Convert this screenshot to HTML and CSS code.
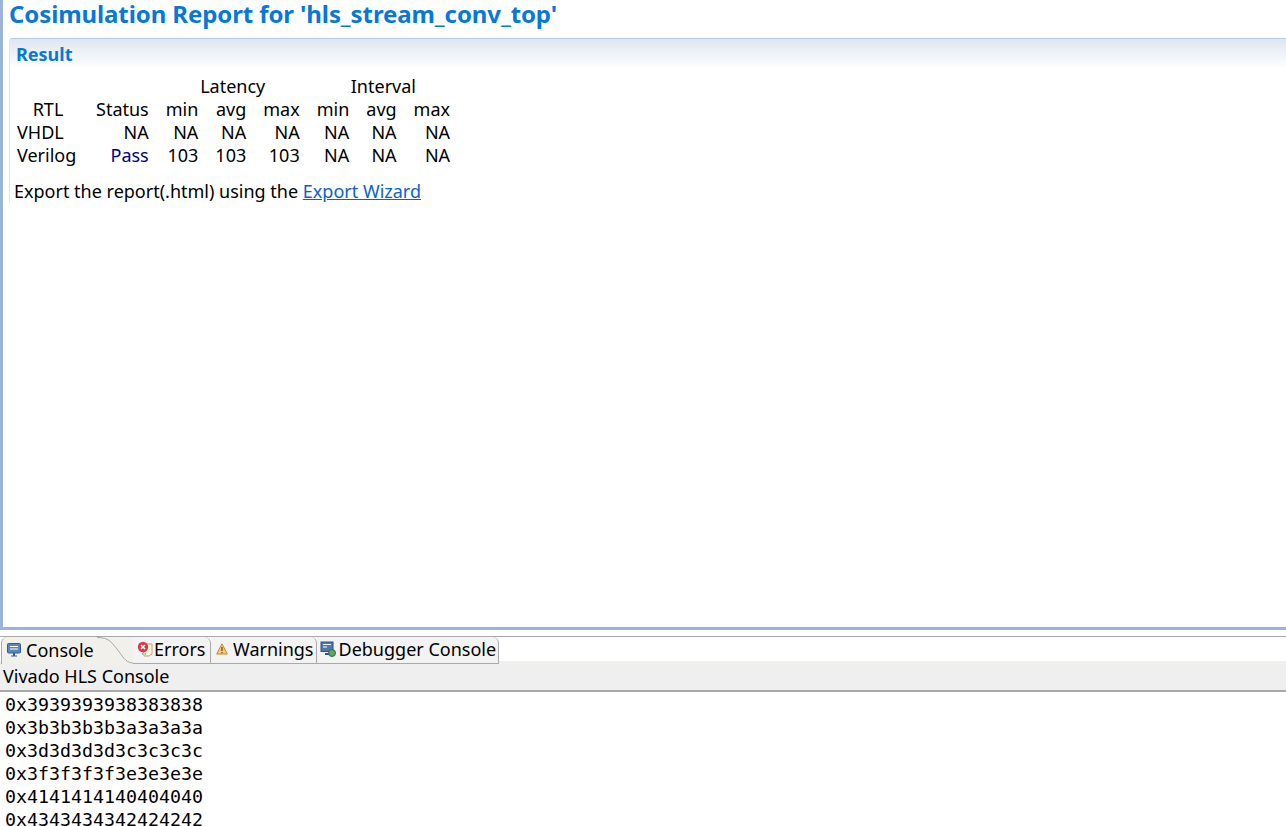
FILE: index.html
```html
<!DOCTYPE html>
<html lang="en">
<head>
<meta charset="utf-8">
<title>Cosimulation Report</title>
<link rel="stylesheet" href="styles.css">
</head>
<body>
<main class="editor">
  <h1 class="title">Cosimulation Report for 'hls_stream_conv_top'</h1>
  <section class="section">
    <h2 class="section-head">Result</h2>
    <table class="report">
      <tr><td></td><td></td><td class="c" colspan="3">Latency</td><td class="c" colspan="3">Interval</td></tr>
      <tr><td class="c">RTL</td><td>Status</td><td>min</td><td>avg</td><td>max</td><td>min</td><td>avg</td><td>max</td></tr>
      <tr><td class="l">VHDL</td><td>NA</td><td>NA</td><td>NA</td><td>NA</td><td>NA</td><td>NA</td><td>NA</td></tr>
      <tr><td class="l">Verilog</td><td class="pass">Pass</td><td>103</td><td>103</td><td>103</td><td>NA</td><td>NA</td><td>NA</td></tr>
    </table>
    <p class="export">Export the report(.html) using the <a href="#">Export Wizard</a></p>
  </section>
</main>
<section class="console">
  <div class="tabs">
    <div class="tab active">
      <svg class="ico" viewBox="0 0 16 16"><rect x="1.5" y="1.5" width="13" height="9.5" rx="1" fill="#5c86b8" stroke="#2f5f96"/><path d="M4 4.5h8M4 7h8" stroke="#fff" stroke-width="1.2"/><path d="M5 13.5h6v1H5zM7 11h2v3H7z" fill="#2f5f96"/></svg>
      <span>Console</span>
      <svg class="close" viewBox="0 0 10 10"><path d="M1.5 1.5l7 7M8.5 1.5l-7 7" stroke="#8a8a8a" stroke-width="2.4"/><path d="M1.5 1.5l7 7M8.5 1.5l-7 7" stroke="#f2f2f2" stroke-width="1"/></svg>
      <svg class="curve" viewBox="0 0 36 28" preserveAspectRatio="none"><path d="M0 0C12 0 14 5 20 12C25 18 28 26 36 26V28H0Z" fill="#f1f0ea"/><path d="M0 .5C12 .5 14 5 20 12C25 18 28 26 36 26" fill="none" stroke="#a9a9a9"/></svg>
    </div>
    <div class="tab errors">
      <svg class="ico" viewBox="0 0 16 16"><path d="M6 3h9v10l-3 2H7z" fill="#fbf6dc" stroke="#b9a770"/><circle cx="6" cy="6" r="5.2" fill="#dc3545"/><path d="M4 4l4 4M8 4l-4 4" stroke="#fff" stroke-width="1.6"/><path d="M5 13h1M8 13h1" stroke="#3f6fb0"/></svg>
      <span>Errors</span>
    </div>
    <div class="tab">
      <svg class="ico small" viewBox="0 0 12 12"><path d="M6 .8L11.3 11H.7Z" fill="#f6cd78" stroke="#c98a2c" stroke-linejoin="round"/><path d="M6 4v4M6 9v1.2" stroke="#6b4a10" stroke-width="1.3"/></svg>
      <span>Warnings</span>
    </div>
    <div class="tab">
      <svg class="ico" viewBox="0 0 16 16"><rect x="1" y="1" width="12" height="9.5" fill="#4f79ad" stroke="#2d5487"/><path d="M3 3.5h8M3 6h4" stroke="#fff"/><path d="M5 13h4" stroke="#2d5487" stroke-width="2"/><circle cx="12" cy="12" r="3.5" fill="#5fa868" stroke="#2f6b3b"/></svg>
      <span>Debugger Console</span>
    </div>
  </div>
  <div class="console-title">Vivado HLS Console</div>
  <pre class="output">0x3939393938383838
0x3b3b3b3b3a3a3a3a
0x3d3d3d3d3c3c3c3c
0x3f3f3f3f3e3e3e3e
0x4141414140404040
0x4343434342424242</pre>
</section>
</body>
</html>
```
FILE: styles.css
```css
html, body {
  margin: 0;
  height: 826px;
  overflow: hidden;
  background: #fff;
}
body {
  display: flex;
  flex-direction: column;
  font-family: "Noto Sans", "Open Sans", sans-serif;
  font-size: 18px;
  color: #000;
}
.editor {
  height: 630px;
  box-sizing: border-box;
  border-left: 3px solid #9db4da;
  border-bottom: 3px solid #9db4da;
  padding: 0 0 0 6px;
  flex: none;
}
.title {
  margin: 0;
  height: 38px;
  font-size: 24px;
  line-height: 27px;
  font-weight: 700;
  color: #0878d8;
  white-space: nowrap;
  letter-spacing: -0.1px;
}
.section {
  border-top: 1px solid #b5c9e4;
  border-left: 1px solid #dfe6f1;
  border-top-left-radius: 3px;
  margin-right: -1px;
}
.section-head {
  margin: 0;
  height: 30px;
  padding-left: 6px;
  font-size: 18px;
  line-height: 30px;
  font-weight: 700;
  color: #0878d8;
  background: linear-gradient(#dfe6f0, #ffffff);
}
.report {
  border-collapse: collapse;
  margin: 6px 0 0 7px;
  line-height: 23px;
}
.report td {
  padding: 0 0 0 17px;
  text-align: right;
  white-space: nowrap;
  height: 23px;
}
.report td:first-child { padding-left: 0; min-width: 62px; }
.report td.c { text-align: center; }
.report td.l { text-align: left; }
.report td.pass { color: #000080; }
.export {
  margin: 12px 0 0 4px;
  line-height: 24px;
}
.export a { color: #0a62c9; }
.console {
  flex: 1;
  min-height: 0;
  display: flex;
  flex-direction: column;
  overflow: hidden;
  padding-top: 6px;
}
.tabs {
  display: flex;
  height: 28px;
  flex: none;
  padding-left: 1px;
  border-top: 1px solid #a9a9a9;
  background: #fff;
  box-sizing: border-box;
  border-bottom: 3px solid #f1f0ea;
}
.tab {
  display: flex;
  align-items: center;
  height: 27px;
  flex: none;
  padding: 0 2px 2px 3px;
  box-sizing: border-box;
  background: #f3f3f3;
  border-right: 1px solid #a9a9a9;
  border-bottom: 1px solid #a9a9a9;
  border-top-right-radius: 6px;
  gap: 3px;
  white-space: nowrap;
}
.tab.active {
  position: relative;
  width: 132px;
  padding-left: 4px;
  gap: 4px;
  background: #f1f0ea;
  border: 0;
  border-left: 1px solid #a9a9a9;
  border-top-left-radius: 6px;
  border-top-right-radius: 0;
  margin-right: -4px;
}
.tab.errors { padding-left: 8px; gap: 1px; width: 82px; }
.ico { width: 16px; height: 16px; flex: none; }
.ico.small { width: 12px; height: 12px; margin: 0 2px; }
.close { width: 10px; height: 10px; margin-left: 3px; flex: none; }
.curve {
  position: absolute;
  right: 0;
  top: 0;
  width: 36px;
  height: 28px;
}
.console-title {
  height: 28px;
  flex: none;
  box-sizing: border-box;
  background: #efefef;
  border-bottom: 2px solid #a9a9a9;
  padding-left: 3px;
  line-height: 25px;
}
.output {
  margin: 0;
  padding: 1px 0 0 5px;
  font-family: "DejaVu Sans Mono", monospace;
  font-size: 18.27px;
  line-height: 23px;
  color: #000;
}
```
